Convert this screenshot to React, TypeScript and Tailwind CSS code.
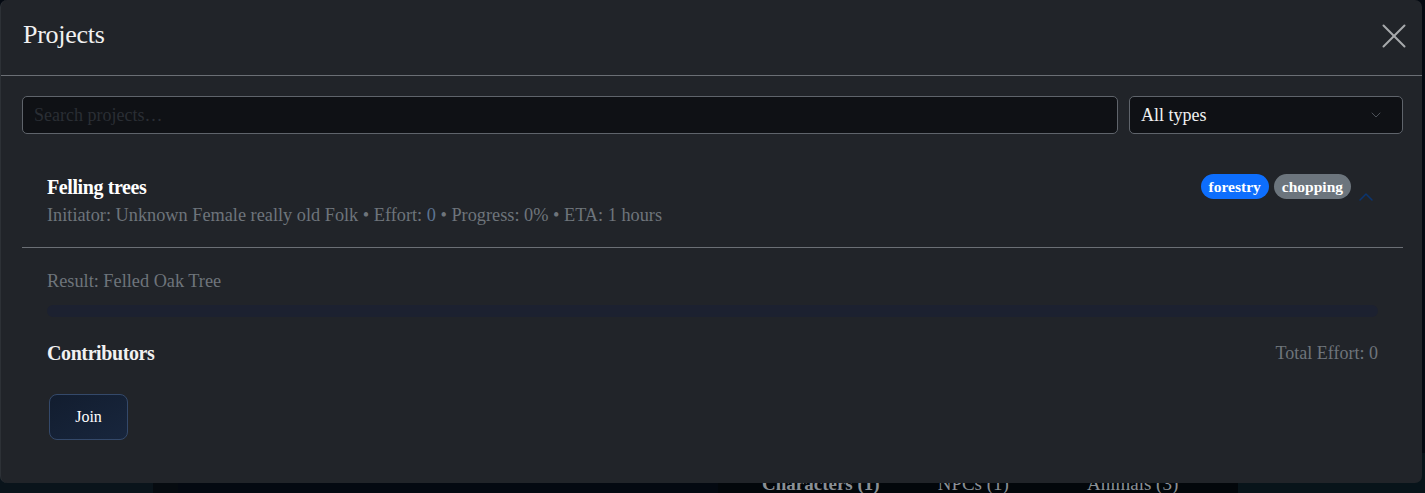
import { X, ChevronDown, ChevronUp } from "lucide-react";

const SERIF = "font-['Liberation_Serif','DejaVu_Serif',serif]";

const TAGS = [
  { label: "forestry", className: "bg-[#0d6efd]" },
  { label: "chopping", className: "bg-[#6c757d]" },
];

export default function App() {
  return (
    <div className={`relative h-[493px] w-[1425px] overflow-hidden bg-[#040911] ${SERIF}`}>
      {/* page behind the modal */}
      <div aria-hidden className="absolute inset-x-0 bottom-0 flex h-[40px]">
        <div className="w-[153px] bg-[#0a141b]" />
        <div className="w-[25px] bg-[#060b10]" />
        <div className="flex-1" />
        <div className="flex w-[520px] items-end gap-[58px] bg-[#03070b] pl-[44px] text-[19px] leading-none text-[#8a8f95]">
          <span className="font-bold">Characters (1)</span>
          <span>NPCs (1)</span>
          <span className="ml-[20px]">Animals (3)</span>
        </div>
        <div className="w-[187px] bg-[#08141a]" />
      </div>

      {/* modal */}
      <div className="absolute left-0 top-0 flex h-[483px] w-[1422px] flex-col rounded-[7px] border-l border-[#2d3136] bg-[#212429] text-white">
        <div className="flex h-[76px] items-center justify-between border-b border-[#6b6f75] pl-[22px] pr-[7px]">
          <h2 className="mb-[6px] text-[26px] leading-none tracking-[-0.01em] text-[#f1f1f1]">Projects</h2>
          <button className="mb-[4px] text-[#a7a9ac]">
            <X className="size-[42px]" strokeWidth={1.15} />
          </button>
        </div>

        <div className="flex flex-col pl-[21px] pr-[19px] pt-[20px]">
          <div className="flex gap-[11px]">
            <input
              placeholder="Search projects…"
              className="h-[38px] flex-1 rounded-[5px] border border-[#5f646b] bg-[#0f1115] px-[11px] text-[18px] text-white placeholder:text-[#2a2e34] outline-none"
            />
            <div className="flex h-[38px] w-[274px] items-center justify-between rounded-[5px] border border-[#5f646b] bg-[#0f1115] pl-[11px] pr-[18px]">
              <span className="text-[18px] text-[#f1f1f1]">All types</span>
              <ChevronDown className="size-[16px] text-[#4c5158]" strokeWidth={1.5} />
            </div>
          </div>

          {/* project card */}
          <div className="flex items-start justify-between border-b border-[#6b6f75] pb-[20px] pl-[25px] pr-[25px] pt-[40px]">
            <div>
              <h3 className="text-[20px] font-bold leading-[26px] tracking-[-0.02em] text-white">Felling trees</h3>
              <p className="mt-[4px] text-[18.3px] leading-[23px] text-[#6e747b]">
                Initiator: Unknown Female really old Folk • Effort:{" "}
                <span className="text-[#5c7391]">0</span> • Progress: 0% • ETA: 1 hours
              </p>
            </div>
            <div className="flex items-start gap-[5px]">
              {TAGS.map((t) => (
                <span
                  key={t.label}
                  className={`rounded-full px-[8px] text-[15.5px] font-bold leading-[25px] text-white ${t.className}`}
                >
                  {t.label}
                </span>
              ))}
              <ChevronUp className="ml-[-2px] mt-[11px] size-[24px] text-[#0b3570]" strokeWidth={1.5} />
            </div>
          </div>

          <div className="px-[25px]">
            <p className="mt-[22px] text-[18.3px] leading-[23px] text-[#6e747b]">Result: Felled Oak Tree</p>
            <div className="mt-[12px] h-[12px] rounded-full bg-[#1c2130]" />
            <div className="mt-[21px] flex items-center justify-between">
              <h4 className="text-[20px] font-bold tracking-[-0.02em] text-[#f1f1f1]">Contributors</h4>
              <span className="text-[18px] text-[#6e747b]">Total Effort: 0</span>
            </div>
            <button className="ml-[2px] mt-[26px] h-[46px] w-[79px] rounded-[8px] border border-[#34496a] bg-gradient-to-br from-[#121d2f] to-[#18263d] text-[16px] text-white">
              Join
            </button>
          </div>
        </div>
      </div>
    </div>
  );
}
